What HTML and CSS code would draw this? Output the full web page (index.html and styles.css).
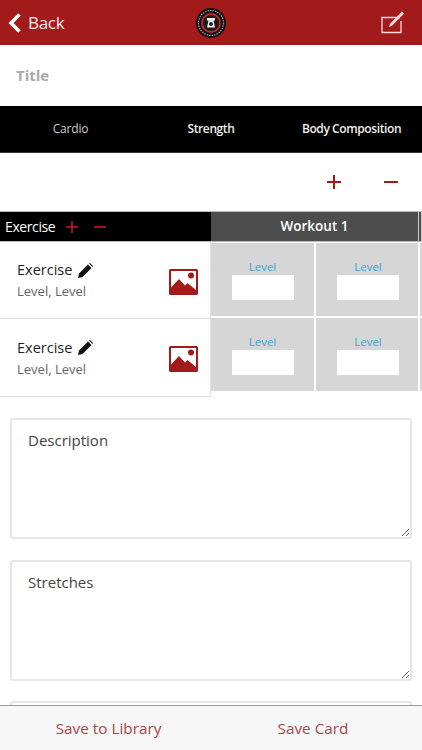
FILE: index.html
```html
<!DOCTYPE html>
<html lang="en">
<head>
  <meta charset="UTF-8">
  <meta name="viewport" content="width=device-width, initial-scale=1.0">
  <title>Card</title>
  <link rel="stylesheet" href="styles.css">
</head>
<body>
  <!-- Top bar -->
  <header class="topbar">
    <a href="#" class="back">
      <svg class="back-icon" viewBox="0 0 13 20"><path d="M11.500 1.500 3 10l8.500 8.500" fill="none" stroke="#fff" stroke-width="3.600"/></svg>
      Back
    </a>
    <svg class="logo" viewBox="0 0 30 30">
      <circle cx="15" cy="15" r="15" fill="#111"/>
      <circle cx="15" cy="15" r="12.500" fill="none" stroke="#999" stroke-width="1.200" stroke-dasharray="1.500 1"/>
      <circle cx="15" cy="15" r="9" fill="#1a1a1a" stroke="#c5282c" stroke-width="1.800"/>
      <path d="M11 10h8v2.500h-1.500l1.500 7h-8l1.500-7H11z" fill="#eee"/>
      <circle cx="15" cy="16" r="2" fill="#222"/>
    </svg>
    <svg class="compose" viewBox="0 0 26 24">
      <path d="M19 7.500H1v15h19V11" fill="none" stroke="#f6dcdc" stroke-width="1.300"/>
      <path d="M8 17 9 13.800 21 1.500l2.200 2L11 15.800z" fill="#f6dcdc"/>
    </svg>
  </header>

  <div class="title">Title</div>

  <nav class="tabs">
    <a href="#" class="tab tab-off">Cardio</a>
    <a href="#" class="tab">Strength</a>
    <a href="#" class="tab">Body Composition</a>
  </nav>

  <div class="actions">
    <svg class="sign" viewBox="0 0 14 14"><path d="M0 7h14M7 0v14" stroke="#a31a1a" stroke-width="2"/></svg>
    <svg class="sign" viewBox="0 0 14 14"><path d="M0 7h14" stroke="#a31a1a" stroke-width="2"/></svg>
  </div>

  <!-- Exercise grid -->
  <section class="grid">
    <div class="exercises">
      <div class="ex-head">
        <span>Exercise</span>
        <svg class="sign-sm" viewBox="0 0 12 12"><path d="M0 6h12M6 0v12" stroke="#c01c1c" stroke-width="1.600"/></svg>
        <svg class="sign-sm" viewBox="0 0 12 12"><path d="M0 6h12" stroke="#c01c1c" stroke-width="1.600"/></svg>
      </div>
      <div class="ex-row">
        <div class="ex-text">
          <div class="ex-name">Exercise
            <svg class="pencil" viewBox="0 0 15 15"><path d="M0 15l1-4.500L10 1.500 13.500 5 4.500 14zM11 .5l1-.5 3 3-.5 1z" fill="#111"/></svg>
          </div>
          <div class="ex-level">Level, Level</div>
        </div>
        <svg class="pic" viewBox="0 0 29 26"><path fill-rule="evenodd" d="M1.500 0h26A1.500 1.500 0 0 1 29 1.500v23a1.500 1.500 0 0 1-1.500 1.500h-26A1.500 1.500 0 0 1 0 24.500v-23A1.500 1.500 0 0 1 1.500 0zM2 2v16.500L10 10l6 6.500 2.500-2.500L27 21V2z" fill="#a31a1a"/><circle cx="22" cy="6.500" r="3" fill="#a31a1a"/></svg>
      </div>
      <div class="ex-row">
        <div class="ex-text">
          <div class="ex-name">Exercise
            <svg class="pencil" viewBox="0 0 15 15"><path d="M0 15l1-4.500L10 1.500 13.500 5 4.500 14zM11 .5l1-.5 3 3-.5 1z" fill="#111"/></svg>
          </div>
          <div class="ex-level">Level, Level</div>
        </div>
        <svg class="pic" viewBox="0 0 29 26"><path fill-rule="evenodd" d="M1.500 0h26A1.500 1.500 0 0 1 29 1.500v23a1.500 1.500 0 0 1-1.500 1.500h-26A1.500 1.500 0 0 1 0 24.500v-23A1.500 1.500 0 0 1 1.500 0zM2 2v16.500L10 10l6 6.500 2.500-2.500L27 21V2z" fill="#a31a1a"/><circle cx="22" cy="6.500" r="3" fill="#a31a1a"/></svg>
      </div>
    </div>

    <div class="workouts">
      <div class="wk-head">
        <div class="wk-title">Workout 1</div>
        <div class="wk-title"></div>
      </div>
      <div class="wk-row">
        <div class="cell"><span class="cell-label">Level</span><div class="cell-input"></div></div>
        <div class="cell"><span class="cell-label">Level</span><div class="cell-input"></div></div>
        <div class="cell"></div>
      </div>
      <div class="wk-row">
        <div class="cell"><span class="cell-label">Level</span><div class="cell-input"></div></div>
        <div class="cell"><span class="cell-label">Level</span><div class="cell-input"></div></div>
        <div class="cell"></div>
      </div>
    </div>
  </section>

  <div class="fields">
    <textarea class="field">Description</textarea>
    <textarea class="field">Stretches</textarea>
    <textarea class="field"></textarea>
  </div>

  <footer class="savebar">
    <a href="#">Save to Library</a>
    <a href="#">Save Card</a>
  </footer>
</body>
</html>
```

FILE: styles.css
```css
* {
  margin: 0;
  padding: 0;
  box-sizing: border-box;
  font-family: "Open Sans", "Noto Sans", sans-serif;
}

html, body {
  height: 750px;
  overflow: hidden;
}

body {
  background: #fff;
  color: #333;
  position: relative;
}

a {
  text-decoration: none;
  color: inherit;
}

/* Top bar */
.topbar {
  height: 45px;
  background: #a31a1a;
  display: flex;
  align-items: center;
  justify-content: space-between;
  padding: 0 15px 0 8px;
}
.back {
  color: #fbeaea;
  font-size: 17px;
  letter-spacing: -0.3px;
  display: flex;
  align-items: center;
  gap: 7px;
  width: 123px;
}
.back-icon {
  width: 13px;
  height: 20px;
}
.logo {
  width: 30px;
  height: 30px;
}
.compose {
  width: 26px;
  height: 24px;
  margin-left: 91px;
  margin-bottom: 2px;
}

.title {
  height: 61px;
  padding: 0 16px 2px;
  display: flex;
  align-items: center;
  font-size: 15px;
  font-weight: 700;
  color: #aaa;
}

/* Tabs */
.tabs {
  height: 47px;
  background: #000;
  display: grid;
  grid-template-columns: 141px 140px 141px;
  align-items: center;
  text-align: center;
  border-bottom: 1px solid #333;
  padding-bottom: 2px;
}
.tab {
  color: #eee;
  font-size: 12px;
  font-weight: 600;
  letter-spacing: -0.4px;
  white-space: nowrap;
}
.tab-off {
  font-weight: 400;
  letter-spacing: -0.2px;
  color: #ccc;
}

.actions {
  height: 58px;
  display: flex;
  justify-content: flex-end;
  align-items: center;
  gap: 43px;
  padding: 0 24px 0 0;
}
.sign {
  width: 14px;
  height: 14px;
  margin-bottom: 1px;
}

/* Grid */
.grid {
  display: flex;
  height: 187px;
  align-items: flex-start;
}
.exercises {
  width: 211px;
  flex: none;
}
.ex-head {
  height: 31px;
  background: #000;
  color: #fff;
  font-size: 14px;
  font-weight: 500;
  letter-spacing: -0.4px;
  display: flex;
  align-items: center;
  gap: 11px;
  padding-left: 5px;
  border-top: 1px solid #bbb;
  border-bottom: 1px solid #bbb;
}
.sign-sm {
  width: 12px;
  height: 12px;
}
.sign-sm:last-child {
  margin-left: 5px;
}
.ex-row {
  height: 77px;
  display: flex;
  align-items: center;
  justify-content: space-between;
  padding: 0 12px 0 17px;
  border-right: 1px solid #e2e2e2;
  border-bottom: 1px solid #ddd;
  background: #fff;
}
.ex-row:last-child {
  height: 78px;
}
.ex-name {
  font-size: 14.500px;
  color: #222;
  display: flex;
  align-items: center;
  gap: 6px;
  line-height: 20px;
}
.pencil {
  width: 15px;
  height: 15px;
}
.ex-level {
  font-size: 13px;
  color: #666;
  margin-top: 2px;
}
.pic {
  width: 29px;
  height: 26px;
  margin-top: 3px;
}

.workouts {
  flex: 1;
  min-width: 0;
}
.wk-head {
  height: 31px;
  display: grid;
  grid-template-columns: 208px 1fr;
  background: #4d4d4d;
  border-top: 1px solid #bbb;
  border-bottom: 1px solid #bbb;
}
.wk-title {
  color: #fff;
  font-size: 13.500px;
  font-weight: 600;
  line-height: 29px;
  text-align: center;
  border-right: 1px solid #ccc;
}
.wk-row {
  display: grid;
  grid-template-columns: 103px 102px 1fr;
  gap: 2px;
  height: 73px;
  margin-top: 2px;
}
.wk-row:nth-child(2) {
  margin-top: 1px;
}
.cell {
  background: #d6d6d6;
  text-align: center;
  padding-top: 15px;
}
.cell:nth-child(2) {
  padding-left: 2px;
}
.cell-label {
  display: block;
  font-size: 11.500px;
  line-height: 17px;
  color: #3da4d8;
}
.cell-input {
  width: 62px;
  height: 25px;
  background: #fff;
  margin: 0 auto;
}

.fields {
  height: 352px;
  overflow: hidden;
  padding: 20px 10px 0;
  display: flex;
  flex-direction: column;
  gap: 20.500px;
}
.field {
  display: block;
  width: 100%;
  height: 121px;
  flex: none;
  border: 2px solid #e6e6e6;
  border-radius: 3px;
  padding: 10px 16px;
  font-size: 15px;
  color: #444;
  outline: none;
}

/* Bottom bar lies over the page */
.savebar {
  position: absolute;
  left: 0;
  right: 0;
  bottom: 0;
  height: 45px;
  background: #f7f7f7;
  border-top: 1px solid #999;
  display: grid;
  grid-template-columns: 217px 1fr;
  align-items: center;
  text-align: center;
  color: #a8454a;
  font-size: 15.300px;
}
.savebar a:last-child {
  padding-right: 13px;
}
```
